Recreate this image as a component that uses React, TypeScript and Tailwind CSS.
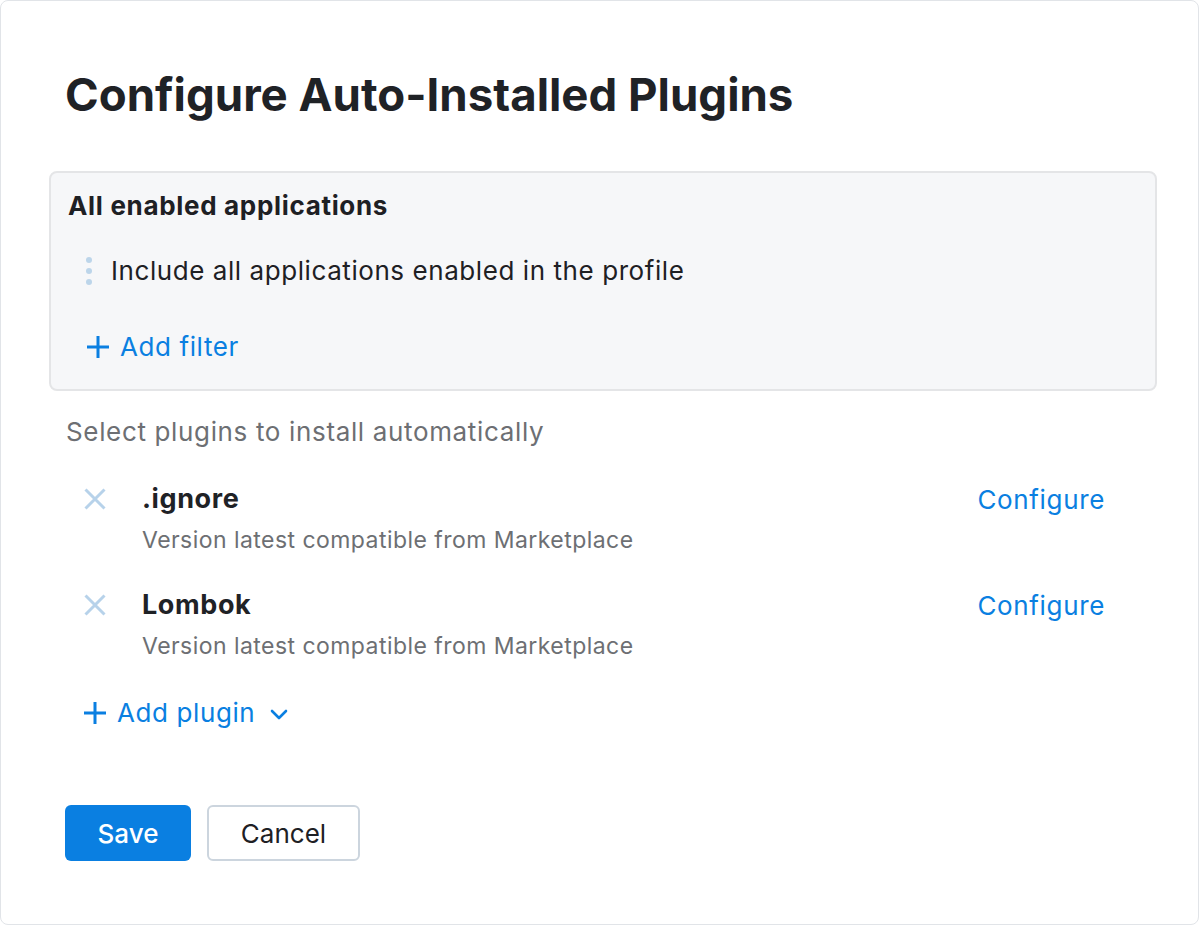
import React from 'react';

const PlusIcon: React.FC = () => (
  <svg width="24" height="24" viewBox="0 0 24 24" className="shrink-0">
    <path d="M12 1v22M1 12h22" stroke="#0a7fe1" strokeWidth="3" fill="none" />
  </svg>
);

const CloseIcon: React.FC = () => (
  <svg width="22" height="22" viewBox="0 0 22 22" className="shrink-0">
    <path d="M1.5 1.5l19 19M20.5 1.5l-19 19" stroke="#b7d2ea" strokeWidth="3" fill="none" />
  </svg>
);

const ChevronDown: React.FC = () => (
  <svg width="18" height="12" viewBox="0 0 18 12" className="shrink-0">
    <path d="M2 3l7 7 7-7" stroke="#0a7fe1" strokeWidth="2.6" fill="none" strokeLinecap="round" strokeLinejoin="round" />
  </svg>
);

const App: React.FC = () => {
  const plugins = [
    { name: '.ignore', source: 'Version latest compatible from Marketplace' },
    { name: 'Lombok', source: 'Version latest compatible from Marketplace' },
  ];

  return (
    <div className="w-[1200px] h-[926px] bg-white font-['Inter',sans-serif] text-[#1e2024]">
      <div className="w-[1199px] h-[925px] border border-[#e1e4e8] rounded-lg pl-[48px] pt-[67px]">
        <h1 className="ml-[16px] text-[45.6px] leading-[54px] font-bold text-[#1f2226]">
          Configure Auto-Installed Plugins
        </h1>

        {/* Filter box */}
        <div className="mt-[49px] w-[1108px] bg-[#f6f7f9] border-2 border-[#e4e5e7] rounded-lg pl-[17px] pt-[15px] pb-[24px]">
          <div className="text-[26px] leading-[36px] font-bold tracking-[0.68px]">All enabled applications</div>
          <div className="mt-[29px] flex items-center h-[36px]">
            <div className="w-[43px] flex flex-col items-center gap-[5px] pr-[2px]">
              <span className="w-[6px] h-[6px] rounded-full bg-[#bcd5ea]" />
              <span className="w-[6px] h-[6px] rounded-full bg-[#bcd5ea]" />
              <span className="w-[6px] h-[6px] rounded-full bg-[#bcd5ea]" />
            </div>
            <span className="text-[26px] leading-[36px] tracking-[0.57px]">Include all applications enabled in the profile</span>
          </div>
          <div className="mt-[40px] ml-[18px] flex items-center gap-[10px] h-[36px] text-[#0a7fe1] text-[26px] leading-[36px] tracking-[0.6px]">
            <PlusIcon />
            <span>Add filter</span>
          </div>
        </div>

        <div className="mt-[23px] ml-[17px] text-[26px] leading-[36px] text-[#6d6f73] tracking-[0.65px]">
          Select plugins to install automatically
        </div>

        <div className="ml-[35px] w-[1021px] mt-[31px] flex flex-col gap-[32px]">
          {plugins.map((p, i) => (
            <div key={i} className="flex items-start">
              <div className="w-[58px] h-[36px] flex items-center">
                <CloseIcon />
              </div>
              <div className="flex-1">
                <div className="text-[27px] leading-[36px] font-bold text-[#1f2226] tracking-[0.6px]">{p.name}</div>
                <div className="mt-[8px] text-[23px] leading-[30px] text-[#6d6f73] tracking-[0.45px]">{p.source}</div>
              </div>
              <div className="text-[26px] leading-[36px] text-[#0a7fe1] mt-[1px] tracking-[0.65px]">Configure</div>
            </div>
          ))}
        </div>

        <div className="mt-[34px] ml-[34px] flex items-center h-[36px] text-[#0a7fe1] text-[26px] leading-[36px] tracking-[0.6px]">
          <PlusIcon />
          <span className="ml-[10px]">Add plugin</span>
          <span className="ml-[15px] mt-[2px]"><ChevronDown /></span>
        </div>

        <div className="mt-[74px] ml-[16px] flex gap-[16px]">
          <button className="w-[126px] h-[56px] rounded-md bg-[#0a7fe1] text-white text-[26px] font-medium">
            Save
          </button>
          <button className="w-[153px] h-[56px] rounded-md bg-white border-2 border-[#ccd5de] text-[#1e2024] text-[26px]">
            Cancel
          </button>
        </div>
      </div>
    </div>
  );
};

export default App;
